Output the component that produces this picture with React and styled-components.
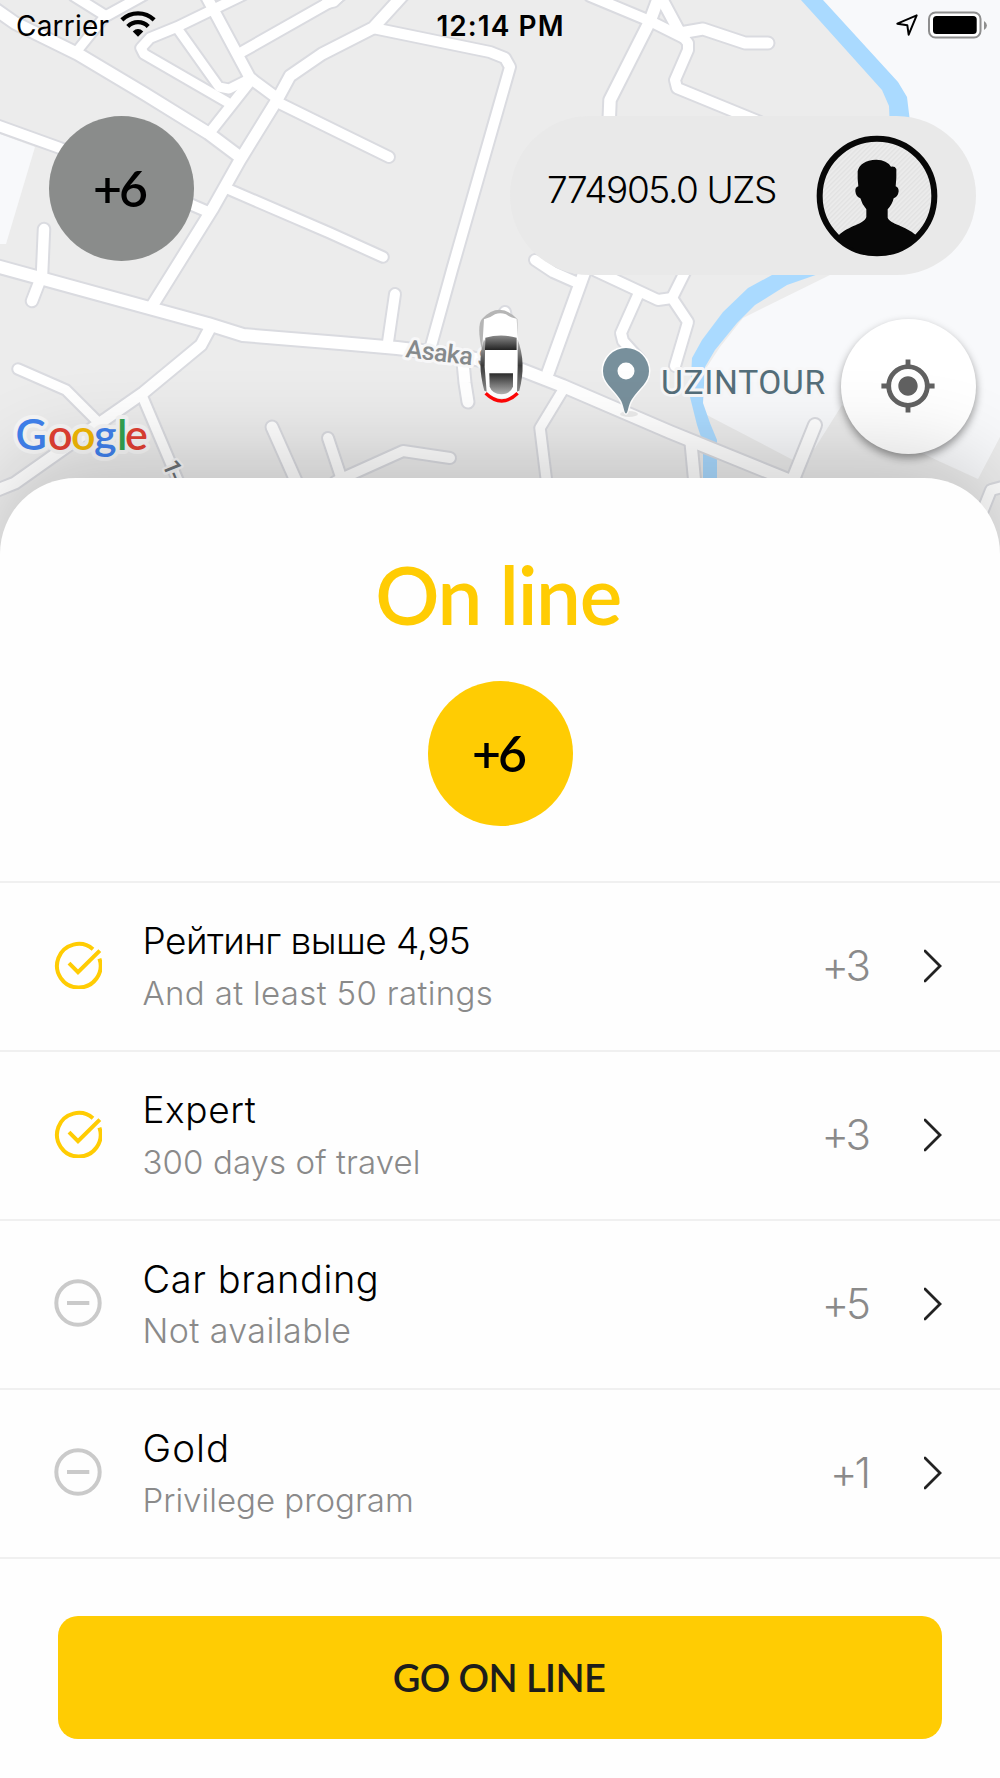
import styled, { createGlobalStyle } from "styled-components"
import { MdMyLocation } from "react-icons/md"

const GlobalStyle = createGlobalStyle`
  body {
    margin: 0;
    background: #fefefe;
    font-family: Inter, "Liberation Sans", sans-serif;
    color: #000;
  }
`

const Screen = styled.div`
  width: 1000px;
  height: 1778px;
  overflow: hidden;
`

const MapArea = styled.div`
  position: relative;
  height: 560px;
  display: flex;
  flex-direction: column;
`

const MapSvg = styled.svg`
  position: absolute;
  inset: 0;
  z-index: -1;
`

const StatusBar = styled.div`
  height: 51px;
  padding: 0 13px 0 16px;
  display: grid;
  grid-template-columns: 1fr auto 1fr;
  align-items: center;
  font-size: 28px;
`

const StatusLeft = styled.div`
  display: flex;
  align-items: center;
  gap: 11px;
  letter-spacing: 0.2px;

  svg {
    margin-bottom: 4px;
  }
`

const Clock = styled.div`
  margin-right: 2px;
  font-weight: 600;
  letter-spacing: 1.05px;
`

const StatusRight = styled.div`
  display: flex;
  justify-content: flex-end;
  align-items: center;
  gap: 10px;
  padding-bottom: 2px;
`

const Header = styled.div`
  margin-top: 65px;
  padding: 0 24px 0 48.5px;
  display: flex;
  justify-content: space-between;
  align-items: flex-start;
`

const Badge = styled.div`
  box-sizing: border-box;
  width: 145px;
  height: 145px;
  padding: 0 4px 1px 0;
  border-radius: 50%;
  background: ${props => props.$color};
  display: flex;
  justify-content: center;
  align-items: center;
  font-family: Lato, sans-serif;
  font-size: 50px;
  font-weight: 600;
  letter-spacing: -3px;
`

const Balance = styled.div`
  box-sizing: border-box;
  width: 466px;
  height: 159px;
  padding: 0 38px 0 37px;
  border-radius: 80px;
  background: #e9e9e9;
  display: flex;
  justify-content: space-between;
  align-items: center;
`

const Amount = styled.span`
  padding-bottom: 12px;
  font-size: 37px;
  font-weight: 300;
  letter-spacing: -1.4px;
  white-space: nowrap;
`

const LocateButton = styled.button`
  align-self: flex-end;
  width: 135px;
  height: 135px;
  margin: 44px 24px 0 0;
  padding: 0 1px 1px 0;
  border: none;
  border-radius: 50%;
  background: #fff;
  color: #616161;
  display: flex;
  justify-content: center;
  align-items: center;
  box-shadow: 0 4px 8px rgba(0, 0, 0, 0.4);
`

const Sheet = styled.div`
  position: relative;
  height: 1300px;
  box-sizing: border-box;
  margin-top: -82px;
  padding-top: 68px;
  border-radius: 76px 76px 0 0;
  background: #fefefe;
  box-shadow: 0 -20px 90px rgba(0, 0, 0, 0.19);
  display: flex;
  flex-direction: column;
  align-items: center;
`

const Title = styled.h1`
  margin: 0 4px 39px 0;
  font-family: Lato, sans-serif;
  font-size: 80px;
  font-weight: 600;
  line-height: 96px;
  letter-spacing: -1.35px;
  color: #ffcc03;
`

const List = styled.ul`
  align-self: stretch;
  margin: 55px 0 57px;
  padding: 0;
  list-style: none;
  border-top: 2px solid #f0f0f0;
`

const Row = styled.li`
  box-sizing: border-box;
  height: 169px;
  padding: 0 58px 2px 53.5px;
  border-bottom: 2px solid #f0f0f0;
  display: flex;
  align-items: center;
`

const StateIcon = styled.svg`
  margin: 0 41px 1px 0;
  fill: none;
  stroke: ${props => (props.$done ? "#ffcc03" : "#cacaca")};
  stroke-width: 4;
`

const RowText = styled.div`
  flex: 1;
  font-weight: 300;
`

const RowTitle = styled.div`
  font-size: ${props => props.$size || 37}px;
  line-height: 54px;
  letter-spacing: ${props => props.$spacing}px;
`

const RowNote = styled.div`
  font-size: ${props => props.$size || 33}px;
  line-height: 50px;
  letter-spacing: ${props => props.$spacing}px;
  color: #8a8a8a;
`

const Points = styled.div`
  margin-right: 56px;
  font-size: 42px;
  font-weight: 300;
  letter-spacing: -3px;
  color: #8a8a8a;
`

const GoButton = styled.button`
  width: 884px;
  height: 123px;
  padding: 0 2px 2px 0;
  border: none;
  border-radius: 20px;
  background: #ffcc03;
  color: #1d1d1b;
  font-family: Lato, sans-serif;
  font-size: 38px;
  font-weight: 600;
  letter-spacing: -0.6px;
`

const items = [
  { title: "Рейтинг выше 4,95", note: "And at least 50 ratings", points: "+3", done: true, ts: -0.55, ns: 0.35 },
  { title: "Expert", note: "300 days of travel", points: "+3", done: true, ts: 0.6, ns: 0.1 },
  { title: "Car branding", note: "Not available", points: "+5", done: false, size: 38, ts: 0.6, noteSize: 34, ns: 0.4 },
  { title: "Gold", note: "Privilege program", points: "+1", done: false, size: 38.5, ts: 1, ns: 0 },
]

// [line width, path]
const roads = [
  [10, "M-4 125 L60 148 L206 211"],
  [9.5, "M74 -4 L106 16 L144 -5"],
  [9, "M106 15 L77 51"],
  [9.5, "M243 -5 L212 10 L177 27 L150 38 L141 48 L144 54 L227 102"],
  [9, "M177 28 L219 87 L229 89 L251 78"],
  [10, "M252 79 L211 131"],
  [10.5, "M205 -6 L250 78 L277 98"],
  [10, "M277 102 L340 133 L389 157"],
  [10, "M240 53 L337 -2 L345 -8"],
  [11, "M404 -6 L373 28 L322 54 L290 76 L277 100 L240 160 L213 208 L152 306"],
  [11.5, "M-5 9 L15 23 L78 54 L145 94 L208 133 L240 157"],
  [9.5, "M228 189 L330 233 L383 257"],
  [10.5, "M44 229 L42 275 L32 301"],
  [11, "M209 330 L201 345 L143 393 L100 423 L15 483 L-5 491"],
  [9.5, "M18 369 L66 390 L98 422"],
  [9.5, "M143 398 L182 490"],
  [11, "M272 427 L300 490"],
  [10, "M328 438 L342 480"],
  [10, "M335 482 L343 478 L403 451 L450 458"],
  [10, "M373 28 L490 52 L505 58 L510 67 L452 270 L431 346"],
  [10, "M395 294 L388 342"],
  [11, "M463 362 L465 383 L468 402"],
  [9, "M325 4 L334 2 L342 -6"],
  [10, "M590 -4 L650 21 L682 37"],
  [11.5, "M660 -6 L650 21 L610 100 L609 125"],
  [11, "M658 -8 L680 33 L703 29 L745 43 L768 43"],
  [10, "M680 33 L688 43 L688 50 L675 80 L677 88 L760 122"],
  [10, "M535 260 L553 272 L580 284"],
  [11.5, "M588 262 L548 373"],
  [10, "M596 271 L658 300 L672 298 L688 322 L675 366"],
  [10, "M672 298 L686 270"],
  [10, "M638 295 L621 333 L623 341 L640 360"],
  [10, "M505 312 L508 330"],
  [9.5, "M563 390 L540 428 L547 485"],
  [11, "M691 443 L695 485"],
  [12, "M815 425 L792 482"],
  [10, "M1006 486 L991 490 L979 520"],
  [12, "M-4 266 L153 309 L208 324 L243 335 L340 343 L397 348 L463 356 L522 370 L563 386 L670 432 L798 484"],
]

const GOOGLE = [
  ["G", 15.5, "#4081ec"],
  ["o", 48, "#e14033"],
  ["o", 71, "#f2b705"],
  ["g", 94, "#4081ec"],
  ["l", 117, "#33a350"],
  ["e", 125, "#e14033"],
]

const CityMap = () => (
  <MapSvg width="1000" height="560" viewBox="0 0 1000 560">
    <defs>
      <linearGradient id="glass" x1="0" y1="0" x2="0" y2="1">
        <stop offset="0" stopColor="#8b8b8b" />
        <stop offset="1" stopColor="#232323" />
      </linearGradient>
      <linearGradient id="rear" x1="0" y1="0" x2="0" y2="1">
        <stop offset="0" stopColor="#2c2c2c" />
        <stop offset="1" stopColor="#b4b4b4" />
      </linearGradient>
      <linearGradient id="side" x1="0" y1="0" x2="0" y2="1">
        <stop offset="0" stopColor="#bdbdbd" />
        <stop offset="0.5" stopColor="#3a3a3a" />
        <stop offset="1" stopColor="#8a8a8a" />
      </linearGradient>
    </defs>
    <rect width="1000" height="560" fill="#ececec" />
    <path d="M0 134 L35 147 L6 244 L0 244 Z" fill="#f8f9fb" />
    <path d="M822 0 H1000 V437 L978 479 L930 457 L860 420 L842 405 L815 448 L793 460 L703 413 V373 L720 347 L743 318 L830 275 L905 235 V118 L898 84 Z" fill="#f8f9fb" />
    <path d="M801 0 L820 21 L882 90 L889 106 L890 130 H911 L907 97 L898 82 L823 0 Z" fill="#aadaff" />
    <path d="M785 268 L772 275 L748 288 L723 312 L702 340 L692 358 L690 397 L697 425 L703 443 V485 H717 V440 L710 423 L703 403 L705 367 L715 350 L737 323 L755 305 L787 285 L830 270 Z" fill="#aadaff" />

    <g fill="none" strokeLinecap="round" strokeLinejoin="round">
      {roads.map(([w, d]) => <path key={d} d={d} stroke="#dadbe0" strokeWidth={w + 4} />)}
      {roads.map(([w, d]) => <path key={d} d={d} stroke="#fff" strokeWidth={w} />)}
    </g>

    <g fontFamily="Roboto, sans-serif" stroke="#f7f7f8" strokeLinejoin="round" paintOrder="stroke">
      <text x="405" y="357" fontSize="25" fontWeight="500" fill="#85898b" strokeWidth="6" letterSpacing="-0.5" transform="rotate(7 405 357)">Asaka S</text>
      <text x="661" y="393.5" fontSize="33.5" fill="#546e7a" strokeWidth="6" letterSpacing="0.7">UZINTOUR</text>
      <text fontSize="24" fontWeight="500" fill="#6d7276" strokeWidth="5" letterSpacing="-2" transform="translate(162 464) rotate(68)">1-</text>
    </g>

    {/* place marker */}
    <ellipse cx="629" cy="414" rx="9" ry="3" fill="#000" opacity="0.08" />
    <path
      d="M626 413.5 C624 413.5 624 405 620 399 C613 388 603 383 603 371 A23 23 0 0 1 649 371 C649 383 639 388 632 399 C628 405 628 413.5 626 413.5 Z"
      fill="#78909c" stroke="#fff" strokeWidth="3" paintOrder="stroke"
    />
    <circle cx="626" cy="371" r="8.5" fill="#fff" />

    {/* car */}
    <g transform="translate(330 270) scale(0.3333)">
      <path d="M456 240 C444 190 446 158 456 147 Q508 92 562 147 L564 205 Z" fill="#b5b5b5" />
      <path d="M457 230 L462 148 Q482 143 495 133 Q510 126 528 133 Q540 143 560 146 L564 205 L574 290 L566 368 Q515 402 465 368 L454 290 Z" fill="#fff" />
      <path d="M462 208 Q440 280 463 362 L470 365 L464 290 L466 215 Z" fill="url(#side)" />
      <path d="M563 208 Q590 280 568 362 L561 365 L563 290 Z" fill="url(#side)" />
      <path d="M466 203 Q513 190 560 203 V240 H465 Z" fill="url(#glass)" />
      <path d="M478 310 H549 V350 Q541 372 514 373 Q487 372 479 350 Z" fill="url(#rear)" />
      <path d="M467 370 Q515 416 563 370" fill="none" stroke="#ff0606" strokeWidth="10" />
    </g>

    <g fontFamily="Lato, sans-serif" fontSize="43" fontWeight="600">
      <text y="450" fill="none" stroke="#f6f6f6" strokeWidth="8" strokeLinejoin="round" aria-hidden="true">
        {GOOGLE.map(([c, x]) => <tspan key={x} x={x}>{c}</tspan>)}
      </text>
      <text y="450">
        {GOOGLE.map(([c, x, fill]) => <tspan key={x} x={x} fill={fill}>{c}</tspan>)}
      </text>
    </g>
  </MapSvg>
)

const WifiIcon = () => (
  <svg width="36" height="27" viewBox="362 29 108 82" fill="none" stroke="#000" strokeWidth="13">
    <path d="M367 59 A70 70 0 0 1 465 59" />
    <path d="M385 79 A43 43 0 0 1 447 79" />
    <path d="M400 94 Q416 80 432 94 L416 110 Z" fill="#000" stroke="none" />
  </svg>
)

const ArrowIcon = () => (
  <svg width="22" height="22" viewBox="707 41 66 66" fill="none" stroke="#000" strokeWidth="6" strokeLinejoin="round">
    <path d="M769 45 L711 70 L741 75 L745 103 Z" />
  </svg>
)

const BatteryIcon = () => (
  <svg width="59" height="28" viewBox="0 0 59 28">
    <rect x="1" y="1.5" width="51.5" height="25" rx="6.5" fill="#fff" stroke="#8e8e8e" strokeWidth="2" />
    <rect x="5" y="5" width="43.7" height="18" rx="3.5" fill="#000" />
    <path d="M56 10 Q59 12 59 14.5 Q59 17 56 19 Z" fill="#8e8e8e" />
  </svg>
)

const Avatar = () => (
  <svg width="122" height="122" viewBox="467 404 366 366">
    <defs>
      <pattern id="stripes" width="10" height="10" patternUnits="userSpaceOnUse" patternTransform="rotate(45)">
        <rect width="10" height="10" fill="#ebebeb" />
        <rect width="4" height="10" fill="#e2e2e2" />
      </pattern>
    </defs>
    <circle cx="650" cy="587" r="172" fill="url(#stripes)" stroke="#070707" strokeWidth="18" />
    <path
      d="M648 478 C615 478 596 494 592 512 Q591 535 594 558 Q584 561 585 573 Q587 590 600 594 Q604 610 618 627 V650 C612 672 565 675 535 705 Q580 764 650 764 Q720 764 768 705 C735 675 690 672 682 652 V627 Q696 612 700 594 Q713 590 715 573 Q715 561 706 558 Q709 535 708 506 Q704 497 692 499 Q680 479 648 478 Z"
      fill="#070707"
    />
  </svg>
)

const Chevron = () => (
  <svg width="18" height="34" viewBox="0 0 18 34" fill="none" stroke="#222" strokeWidth="2.8">
    <path d="M1 2 L16 17 L1 32" strokeLinecap="round" />
  </svg>
)

const RowState = ({ done }) => (
  <StateIcon $done={done} width="48" height="48" viewBox="0 0 48 48">
    {done ? (
      <>
        <path d="M45.4 17.6 A21.8 21.8 0 1 1 39 8.2" />
        <path d="M15 22.2 L24 31.2 L45.8 9.6" />
      </>
    ) : (
      <>
        <circle cx="24" cy="24" r="21.7" />
        <path d="M13 24 H35.3" />
      </>
    )}
  </StateIcon>
)

const App = () => {
  return (
    <Screen>
      <GlobalStyle />
      <MapArea>
        <CityMap />
        <StatusBar>
          <StatusLeft>Carrier <WifiIcon /></StatusLeft>
          <Clock>12:14 PM</Clock>
          <StatusRight><ArrowIcon /><BatteryIcon /></StatusRight>
        </StatusBar>
        <Header>
          <Badge $color="#8a8c8b">+6</Badge>
          <Balance>
            <Amount>774905.0 UZS</Amount>
            <Avatar />
          </Balance>
        </Header>
        <LocateButton><MdMyLocation size={58} /></LocateButton>
      </MapArea>
      <Sheet>
        <Title>On line</Title>
        <Badge $color="#ffcc03">+6</Badge>
        <List>
          {items.map(item => (
            <Row key={item.title}>
              <RowState done={item.done} />
              <RowText>
                <RowTitle $size={item.size} $spacing={item.ts}>{item.title}</RowTitle>
                <RowNote $size={item.noteSize} $spacing={item.ns}>{item.note}</RowNote>
              </RowText>
              <Points>{item.points}</Points>
              <Chevron />
            </Row>
          ))}
        </List>
        <GoButton>GO ON LINE</GoButton>
      </Sheet>
    </Screen>
  )
}

export default App
